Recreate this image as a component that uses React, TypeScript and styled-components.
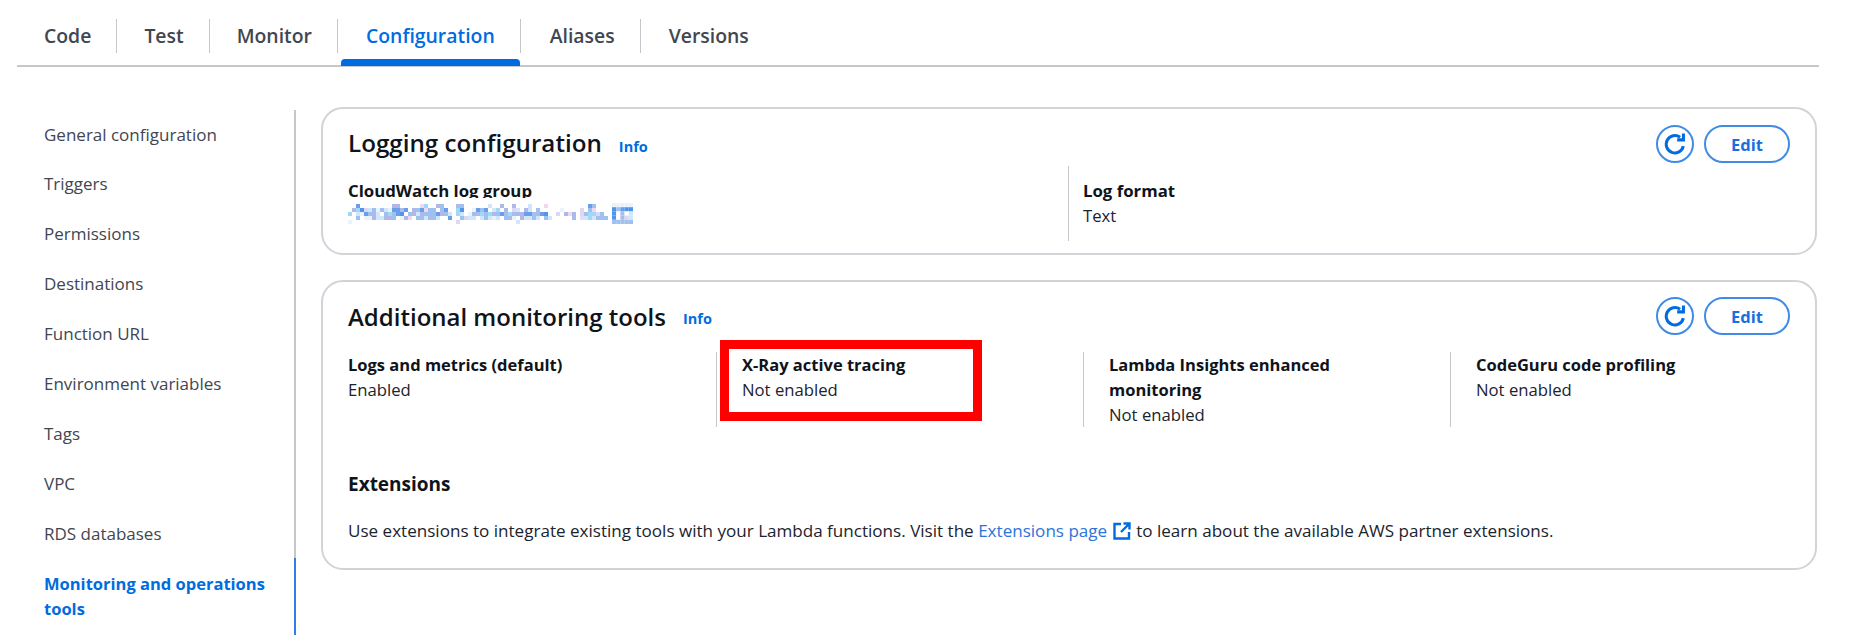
import React from "react";
import styled, { createGlobalStyle } from "styled-components";

const Global = createGlobalStyle`
  html, body { margin: 0; padding: 0; background: #fff; }
  body { font-family: "Open Sans", "Noto Sans", "Liberation Sans", sans-serif; color: #0f141a; overflow: hidden; }
  * { box-sizing: border-box; }
`;

const Page = styled.div`
  width: 1870px;
  height: 637px;
  padding: 0 53px 0 17px;
`;
const TabBar = styled.div`
  display: flex;
  align-items: center;
  height: 67px;
  padding: 19px 0 12px 27px;
  border-bottom: 2px solid #c6c6cd;
  margin-right: -2px;
`;
const Tab = styled.div<{ $active?: boolean; $pad: number; $last?: boolean }>`
  position: relative;
  display: flex;
  align-items: center;
  height: 34px;
  padding: 0 25px 2px ${(p) => p.$pad}px;
  font-size: 19.4px;
  font-weight: 600;
  color: ${(p) => (p.$active ? "#006ce0" : "#424650")};
  border-right: 1px solid ${(p) => (p.$last ? "transparent" : "#c6c6cd")};
`;
const TabMark = styled.div`
  position: absolute;
  left: 3px;
  right: 0;
  bottom: -13px;
  height: 7px;
  background: #006ce0;
  border-radius: 4px 4px 0 0;
`;
const Body = styled.div`
  display: flex;
  margin-top: 43px;
`;
const Nav = styled.nav`
  flex: 0 0 279px;
  border-right: 2px solid #c6c6cd;
  padding: 0 18px 0 27px;
  height: 525px;
`;
const NavItem = styled.div<{ $active?: boolean }>`
  position: relative;
  padding: 11.5px 0 13.4px;
  font-size: ${(p) => (p.$active ? 16.5 : 17)}px;
  line-height: 25px;
  font-weight: ${(p) => (p.$active ? 700 : 400)};
  color: ${(p) => (p.$active ? "#006ce0" : "#424650")};
`;
const NavMark = styled.div`
  position: absolute;
  top: -1px;
  bottom: -1px;
  right: -20px;
  width: 2px;
  background: #2f7fe6;
`;
const Main = styled.main`
  flex: 1;
  margin: -3px 0 0 25px;
  display: flex;
  flex-direction: column;
  gap: 25px;
`;
const Card = styled.section<{ $top: number; $bottom: number }>`
  border: 2px solid #d2d2d9;
  border-radius: 22px;
  padding: ${(p) => p.$top}px 25px ${(p) => p.$bottom}px 25px;
  background: #fff;
`;
const CardHeader = styled.header`
  display: flex;
  align-items: center;
  height: 38px;
`;
const Heading = styled.h2<{ $lift?: boolean }>`
  margin: ${(p) => (p.$lift ? "-3px" : "0")} 0 0;
  font-size: ${(p) => (p.$lift ? 24.2 : 24)}px;
  font-weight: 600;
  color: #0f141a;
`;
const InfoLink = styled.span`
  margin-left: 17px;
  margin-top: 5px;
  font-size: 14.5px;
  font-weight: 700;
  color: #006ce0;
`;
const Actions = styled.div`
  margin-left: auto;
  display: flex;
  gap: 10px;
`;
const IconButton = styled.div`
  width: 38px;
  height: 38px;
  border: 2px solid #3f8be6;
  border-radius: 50%;
  display: flex;
  align-items: center;
  justify-content: center;
  color: #006ce0;
`;
const EditButton = styled.div`
  width: 86px;
  height: 38px;
  border: 2px solid #3f8be6;
  border-radius: 19px;
  display: flex;
  align-items: center;
  justify-content: center;
  font-size: 16.5px;
  font-weight: 700;
  color: #1a6fe0;
`;
const LogGrid = styled.div`
  display: grid;
  grid-template-columns: 720px 1fr;
  margin-top: 3px;
  height: 75px;
`;
const ToolGrid = styled.div`
  display: grid;
  grid-template-columns: 368px 367px 367px 1fr;
  margin-top: 17px;
  height: 75px;
`;
const Cell = styled.div<{ $divided?: boolean; $inset?: number; $pad?: number }>`
  position: relative;
  padding-top: ${(p) => p.$inset ?? 0}px;
  padding-left: ${(p) => (p.$divided ? p.$pad ?? 25 : 0)}px;
  border-left: ${(p) => (p.$divided ? "1px solid #c6c6cd" : "none")};
`;
const Label = styled.div<{ $wide?: boolean }>`
  font-size: ${(p) => (p.$wide ? 16.8 : 16.5)}px;
  line-height: 25px;
  font-weight: 700;
  color: #0f141a;
  white-space: nowrap;
`;
const Value = styled.div`
  font-size: 16.7px;
  line-height: 25px;
  color: #1b232d;
`;
const Mosaic = styled.svg`
  display: block;
  position: relative;
  margin-top: -5px;
  background: #fff;
`;
const Highlight = styled.div`
  position: absolute;
  left: 3px;
  top: -12px;
  width: 262px;
  height: 81px;
  border: 9px solid #ff0000;
  pointer-events: none;
`;
const SectionTitle = styled.h3`
  margin: 45px 0 0;
  font-size: 19px;
  line-height: 25px;
  font-weight: 700;
  color: #0f141a;
`;
const Paragraph = styled.p`
  margin: 21px 0 0;
  font-size: 17.07px;
  line-height: 25px;
  color: #1b232d;
  display: flex;
  align-items: center;
  white-space: pre;
`;
const TextLink = styled.span`
  color: #2b74d8;
`;
const LinkIcon = styled.svg`
  margin: 0 5px 0 6px;
  flex: none;
`;

const Refresh = () => (
  <svg width="26" height="26" viewBox="0 0 24 24" fill="none" stroke="currentColor" strokeWidth="2.8">
    <path d="M19.7 14a8 8 0 1 1-3-8.2" />
    <path d="M19.8 2.2v6H14" strokeLinejoin="miter" />
  </svg>
);

const External = () => (
  <LinkIcon width="18" height="18" viewBox="0 0 18 18" fill="none" stroke="#006ce0" strokeWidth="2.4">
    <path d="M8 2H1.5v14.5H16V10" />
    <path d="M10.5 1.5h6v6M16.5 1.5L8 10" />
  </LinkIcon>
);

const palette: Record<string, string> = {
  ".": "#ffffff",
  a: "#eaf2fc",
  b: "#cfe6fb",
  c: "#a0d8f8",
  d: "#a0c0f0",
  e: "#6a9eea",
  f: "#4d96ea",
  g: "#b0b8e8",
  h: "#f0d8f0",
  i: "#dcd8f2",
};
const rows = [
  "..e........gg.....hc..gd...gd......b..g..g...b...h..........ed...",
  ".gcfibdadbaeege.gdehdd.de..cf..aede.bc.g.ib.gb.d.....a....i.dh...",
  "c.baedgb.dcdef.dgbgdddegdb.cb.agdcdcgdedcdggeedgef..i.ghg.idccid.",
  "..d.aagbbggd.agh.ddbddb..e..dibb.bdbab.dga.gbbdb.db.....d.hbcbddd",
  "a..........................i..............b......................",
];
const iconRows = ["aaaaa", "fdeff", "f.d.b", "f.gib", "ddddd"];

const BlurredLink = () => (
  <Mosaic width="285" height="28" viewBox="0 0 285 28">
    {rows.flatMap((row, y) =>
      row.split("").map((c, x) => (
        <rect key={`${x}-${y}`} x={x * 4} y={6 + y * 4} width="4" height="4" fill={palette[c]} />
      ))
    )}
    {iconRows.flatMap((row, y) =>
      row.split("").map((c, x) => (
        <rect key={`i${x}-${y}`} x={264 + x * 4.2} y={5 + y * 4.2} width="4.2" height="4.2" fill={palette[c]} />
      ))
    )}
  </Mosaic>
);

const navItems = [
  "General configuration",
  "Triggers",
  "Permissions",
  "Destinations",
  "Function URL",
  "Environment variables",
  "Tags",
  "VPC",
  "RDS databases",
];

const Buttons = () => (
  <Actions>
    <IconButton>
      <Refresh />
    </IconButton>
    <EditButton>Edit</EditButton>
  </Actions>
);

export default function App() {
  return (
    <Page>
      <Global />
      <TabBar>
        <Tab $pad={0}>Code</Tab>
        <Tab $pad={27}>Test</Tab>
        <Tab $pad={27}>Monitor</Tab>
        <Tab $pad={28} $active>
          Configuration
          <TabMark />
        </Tab>
        <Tab $pad={29}>Aliases</Tab>
        <Tab $pad={28} $last>
          Versions
        </Tab>
      </TabBar>
      <Body>
        <Nav>
          {navItems.map((n) => (
            <NavItem key={n}>{n}</NavItem>
          ))}
          <NavItem $active>
            Monitoring and operations tools
            <NavMark />
          </NavItem>
        </Nav>
        <Main>
          <Card $top={16} $bottom={12}>
            <CardHeader>
              <Heading $lift>Logging configuration</Heading>
              <InfoLink>Info</InfoLink>
              <Buttons />
            </CardHeader>
            <LogGrid>
              <Cell $inset={12}>
                <Label $wide>CloudWatch log group</Label>
                <BlurredLink />
              </Cell>
              <Cell $divided $inset={12} $pad={14}>
                <Label $wide>Log format</Label>
                <Value>Text</Value>
              </Cell>
            </LogGrid>
          </Card>
          <Card $top={15} $bottom={25}>
            <CardHeader>
              <Heading>Additional monitoring tools</Heading>
              <InfoLink>Info</InfoLink>
              <Buttons />
            </CardHeader>
            <ToolGrid>
              <Cell>
                <Label>Logs and metrics (default)</Label>
                <Value>Enabled</Value>
              </Cell>
              <Cell $divided>
                <Label>X-Ray active tracing</Label>
                <Value>Not enabled</Value>
                <Highlight />
              </Cell>
              <Cell $divided>
                <Label>
                  Lambda Insights enhanced
                  <br />
                  monitoring
                </Label>
                <Value>Not enabled</Value>
              </Cell>
              <Cell $divided>
                <Label>CodeGuru code profiling</Label>
                <Value>Not enabled</Value>
              </Cell>
            </ToolGrid>
            <SectionTitle>Extensions</SectionTitle>
            <Paragraph>
              Use extensions to integrate existing tools with your Lambda functions. Visit the{" "}
              <TextLink>Extensions page</TextLink>
              <External />
              to learn about the available AWS partner extensions.
            </Paragraph>
          </Card>
        </Main>
      </Body>
    </Page>
  );
}
